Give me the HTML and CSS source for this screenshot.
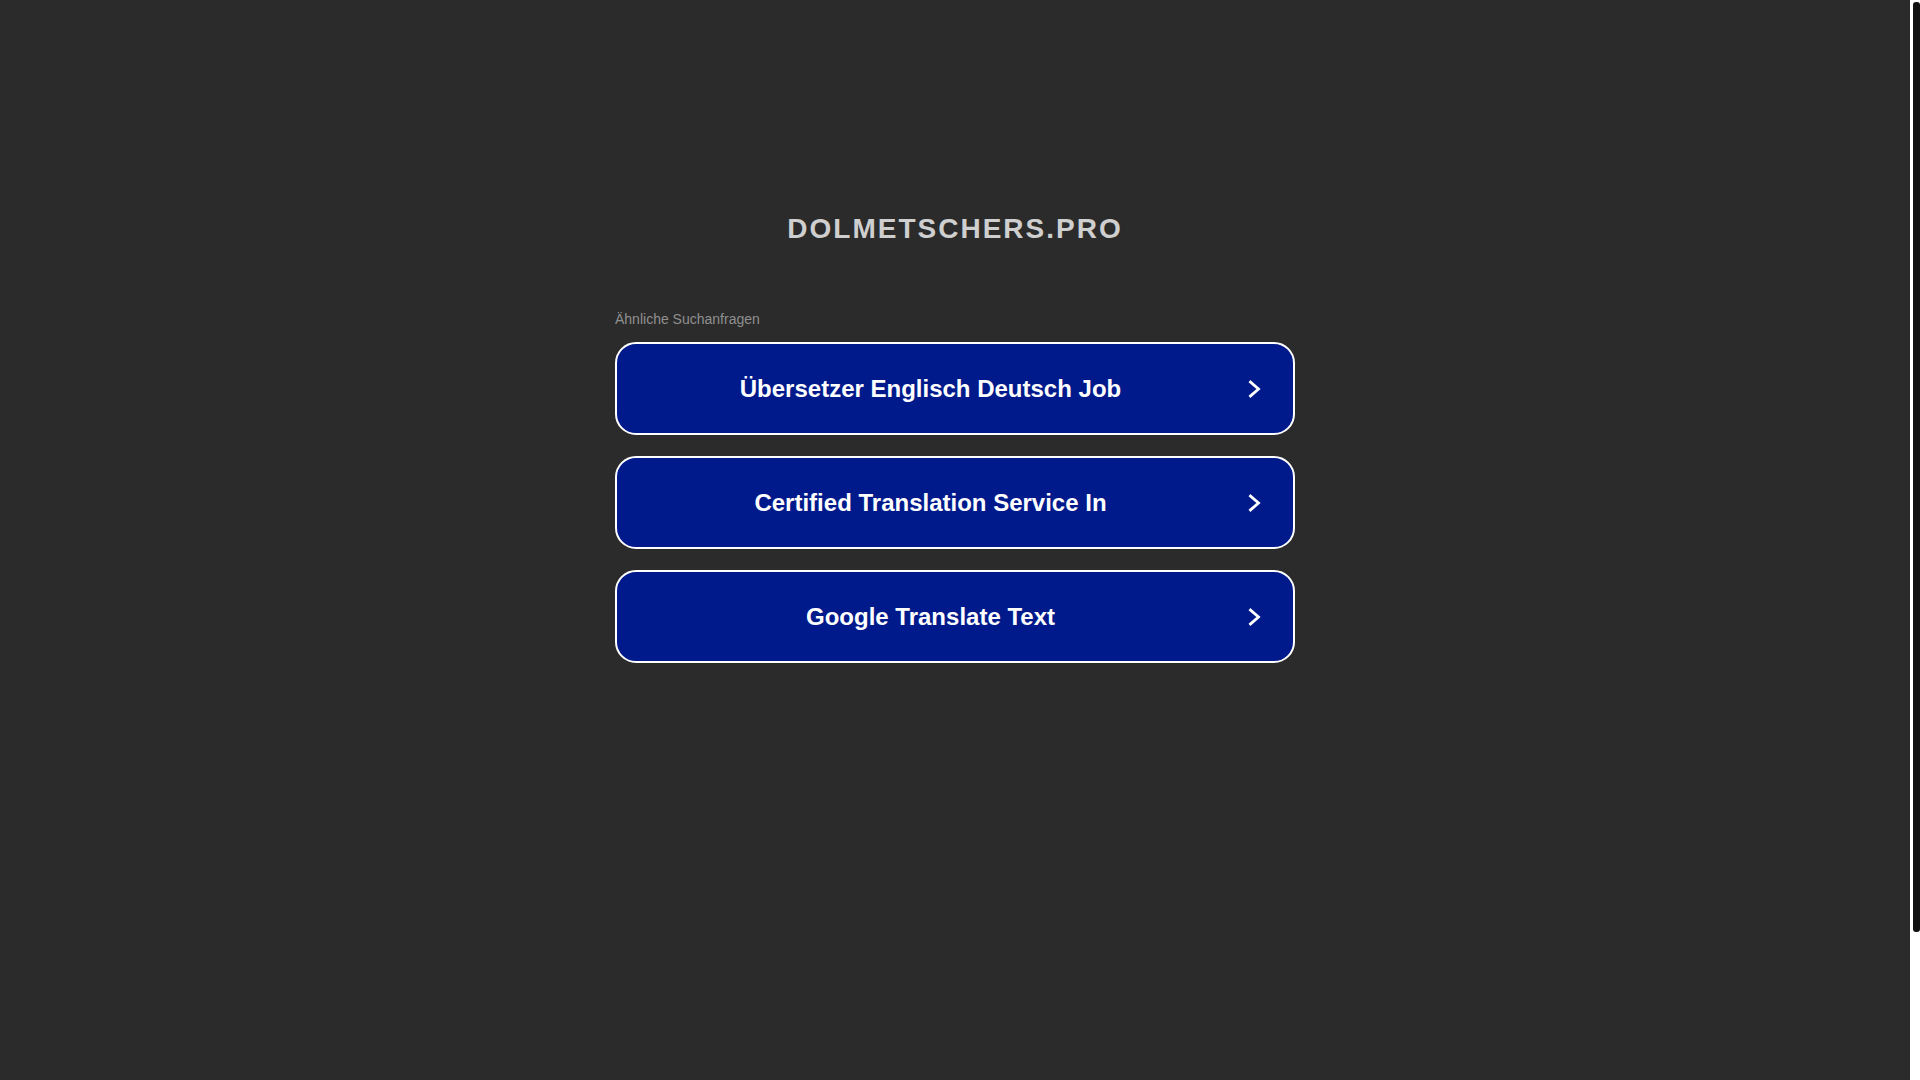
FILE: index.html
```html
<!DOCTYPE html>
<html lang="de">
<head>
<meta charset="utf-8">
<title>dolmetschers.pro</title>
<link rel="stylesheet" href="styles.css">
</head>
<body>
<div class="page">
  <div class="content">
    <h1 class="domain">DOLMETSCHERS.PRO</h1>
    <p class="related-label">Ähnliche Suchanfragen</p>
    <ul class="links">
      <li>
        <a class="link-button" href="#">
          <span class="link-text">Übersetzer Englisch Deutsch Job</span>
          <svg class="chevron" viewBox="0 0 13 18" aria-hidden="true"><path d="M2.5 2 L10.5 9 L2.5 16" /></svg>
        </a>
      </li>
      <li>
        <a class="link-button" href="#">
          <span class="link-text">Certified Translation Service In</span>
          <svg class="chevron" viewBox="0 0 13 18" aria-hidden="true"><path d="M2.5 2 L10.5 9 L2.5 16" /></svg>
        </a>
      </li>
      <li>
        <a class="link-button" href="#">
          <span class="link-text">Google Translate Text</span>
          <svg class="chevron" viewBox="0 0 13 18" aria-hidden="true"><path d="M2.5 2 L10.5 9 L2.5 16" /></svg>
        </a>
      </li>
    </ul>
  </div>
</div>
<div class="scrollbar" aria-hidden="true">
  <div class="scrollbar-thumb"></div>
</div>
</body>
</html>
```

FILE: styles.css
```css
html {
  background: #2b2b2b;
}

body {
  margin: 0;
  height: 100vh;
  overflow: hidden;
  display: flex;
  background: #2b2b2b;
  font-family: "Liberation Sans", Arial, sans-serif;
}

.page {
  flex: 1;
  padding-top: 213px;
}

.content {
  width: 680px;
  margin: 0 auto;
}

.domain {
  margin: 0;
  font-size: 28px;
  line-height: 32px;
  font-weight: bold;
  letter-spacing: 2px;
  text-align: center;
  color: #cfcfcf;
}

.related-label {
  margin: 66px 0 0;
  font-size: 14px;
  line-height: 16px;
  color: #8f8f8f;
}

.links {
  list-style: none;
  margin: 15px 0 0;
  padding: 0;
}

.links li {
  margin-bottom: 21px;
}

.link-button {
  display: flex;
  align-items: center;
  height: 93px;
  box-sizing: border-box;
  padding: 0 28px 0 0;
  border: 2px solid #ffffff;
  border-radius: 21px;
  background: #011a8b;
  color: #ffffff;
  text-decoration: none;
}

.link-text {
  flex: 1;
  text-align: center;
  font-size: 24px;
  font-weight: bold;
}

.chevron {
  width: 13px;
  height: 18px;
  margin: 0 4px;
  fill: none;
  stroke: #ffffff;
  stroke-width: 2.8;
  stroke-linecap: square;
  stroke-linejoin: miter;
}

/* page scrollbar: white track with a dark rounded thumb */
.scrollbar {
  width: 10px;
  height: 100vh;
  background: #ffffff;
  display: flex;
  justify-content: flex-end;
}

.scrollbar-thumb {
  width: 7px;
  height: 930px;
  margin-top: 2px;
  border-radius: 3px;
  background: #111111;
}
```
